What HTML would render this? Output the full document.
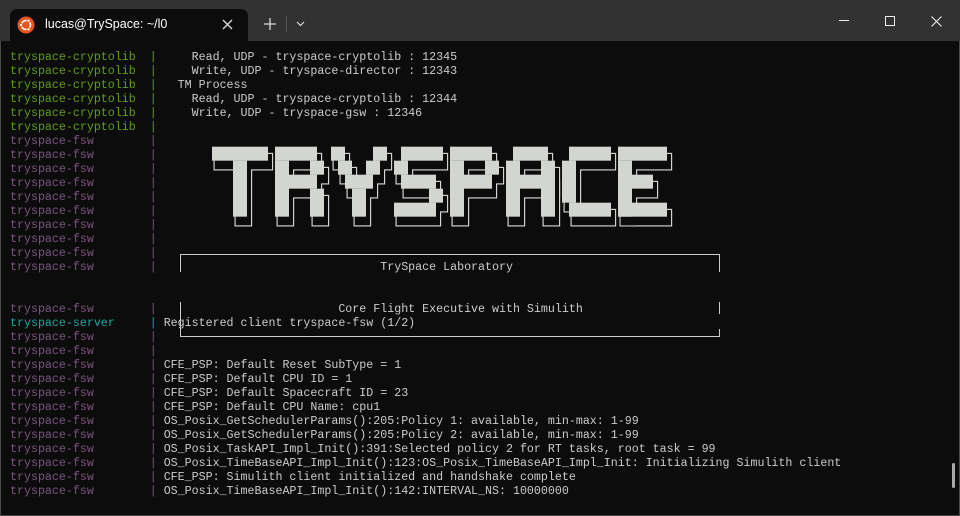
<!DOCTYPE html>
<html><head><meta charset="utf-8"><style>
*{margin:0;padding:0;box-sizing:border-box}
body{width:960px;height:516px;background:#0c0c0c;overflow:hidden;position:relative;font-family:"Liberation Mono",monospace;font-size:11.65px;color:#cccccc}
#tb{position:absolute;left:0;top:0;width:960px;height:41px;background:#323232}
#tab{position:absolute;left:10px;top:9px;width:238px;height:32px;background:#0c0c0c;border-radius:7px 7px 0 0}
.t{position:absolute;font-family:"Liberation Sans",sans-serif;color:#fff;font-size:12.5px}
#txt{position:absolute;left:0;top:2px;width:960px;height:500px}
.l{position:absolute;left:10px;white-space:pre;line-height:14px;height:14px}
.g{color:#5f9e1c}.p{color:#7c5480}.c{color:#1fa3a3}
.box{position:absolute;background:#cccccc}
#fr{position:absolute;left:0;top:41px;width:960px;height:475px;border:1px solid #4a4a4a;border-top:none}
</style></head><body>
<div id="tb">
<div id="tab"></div>
<svg style="position:absolute;left:17px;top:16px" width="18" height="18" viewBox="0 0 18 18"><circle cx="9" cy="9" r="8.5" fill="#e9541f"/><circle cx="9" cy="9" r="4.5" fill="none" stroke="#fff" stroke-width="1.6"/><circle cx="4" cy="9" r="1.6" fill="#fff" stroke="#e9541f" stroke-width="0.8"/><circle cx="11.5" cy="4.7" r="1.6" fill="#fff" stroke="#e9541f" stroke-width="0.8"/><circle cx="11.5" cy="13.3" r="1.6" fill="#fff" stroke="#e9541f" stroke-width="0.8"/></svg>
<div class="t" style="left:45px;top:17px">lucas@TrySpace: ~/l0</div>
<svg style="position:absolute;left:222px;top:19px" width="11" height="11"><path d="M1 1L10 10M10 1L1 10" stroke="#ddd" stroke-width="1.3"/></svg>
<svg style="position:absolute;left:264px;top:18px" width="12" height="12"><path d="M6 0V12M0 6H12" stroke="#ddd" stroke-width="1.3"/></svg>
<div style="position:absolute;left:286px;top:16px;width:1px;height:16px;background:#555"></div>
<svg style="position:absolute;left:296px;top:21px" width="9" height="6"><path d="M1 1L4.5 4.5L8 1" stroke="#ddd" stroke-width="1.2" fill="none"/></svg>
<div style="position:absolute;left:839px;top:20px;width:10px;height:1px;background:#eee"></div>
<div style="position:absolute;left:885px;top:16px;width:10px;height:10px;border:1px solid #eee"></div>
<svg style="position:absolute;left:931px;top:16px" width="11" height="11"><path d="M0.5 0.5L10.5 10.5M10.5 0.5L0.5 10.5" stroke="#eee" stroke-width="1.1"/></svg>
</div>
<div id="fr"></div>

<div id="txt">
<div class="l" style="top:49px"><span class="g">tryspace-cryptolib  |</span>     Read, UDP - tryspace-cryptolib : 12345</div>
<div class="l" style="top:63px"><span class="g">tryspace-cryptolib  |</span>     Write, UDP - tryspace-director : 12343</div>
<div class="l" style="top:77px"><span class="g">tryspace-cryptolib  |</span>   TM Process</div>
<div class="l" style="top:91px"><span class="g">tryspace-cryptolib  |</span>     Read, UDP - tryspace-cryptolib : 12344</div>
<div class="l" style="top:105px"><span class="g">tryspace-cryptolib  |</span>     Write, UDP - tryspace-gsw : 12346</div>
<div class="l" style="top:119px"><span class="g">tryspace-cryptolib  |</span></div>
<div class="l p" style="top:133px">tryspace-fsw        |</div>
<div class="l p" style="top:147px">tryspace-fsw        |</div>
<div class="l p" style="top:161px">tryspace-fsw        |</div>
<div class="l p" style="top:175px">tryspace-fsw        |</div>
<div class="l p" style="top:189px">tryspace-fsw        |</div>
<div class="l p" style="top:203px">tryspace-fsw        |</div>
<div class="l p" style="top:217px">tryspace-fsw        |</div>
<div class="l p" style="top:231px">tryspace-fsw        |</div>
<div class="l p" style="top:245px">tryspace-fsw        |</div>
<div class="l" style="top:259px"><span class="p">tryspace-fsw        |</span>                                TrySpace Laboratory</div>
<div class="l" style="top:301px"><span class="p">tryspace-fsw        |</span>                          Core Flight Executive with Simulith</div>
<div class="l" style="top:315px"><span class="c">tryspace-server     |</span> Registered client tryspace-fsw (1/2)</div>
<div class="l p" style="top:329px">tryspace-fsw        |</div>
<div class="l p" style="top:343px">tryspace-fsw        |</div>
<div class="l" style="top:357px"><span class="p">tryspace-fsw        |</span> CFE_PSP: Default Reset SubType = 1</div>
<div class="l" style="top:371px"><span class="p">tryspace-fsw        |</span> CFE_PSP: Default CPU ID = 1</div>
<div class="l" style="top:385px"><span class="p">tryspace-fsw        |</span> CFE_PSP: Default Spacecraft ID = 23</div>
<div class="l" style="top:399px"><span class="p">tryspace-fsw        |</span> CFE_PSP: Default CPU Name: cpu1</div>
<div class="l" style="top:413px"><span class="p">tryspace-fsw        |</span> OS_Posix_GetSchedulerParams():205:Policy 1: available, min-max: 1-99</div>
<div class="l" style="top:427px"><span class="p">tryspace-fsw        |</span> OS_Posix_GetSchedulerParams():205:Policy 2: available, min-max: 1-99</div>
<div class="l" style="top:441px"><span class="p">tryspace-fsw        |</span> OS_Posix_TaskAPI_Impl_Init():391:Selected policy 2 for RT tasks, root task = 99</div>
<div class="l" style="top:455px"><span class="p">tryspace-fsw        |</span> OS_Posix_TimeBaseAPI_Impl_Init():123:OS_Posix_TimeBaseAPI_Impl_Init: Initializing Simulith client</div>
<div class="l" style="top:469px"><span class="p">tryspace-fsw        |</span> CFE_PSP: Simulith client initialized and handshake complete</div>
<div class="l" style="top:483px"><span class="p">tryspace-fsw        |</span> OS_Posix_TimeBaseAPI_Impl_Init():142:INTERVAL_NS: 10000000</div>
</div>

<div class="box" style="left:180px;top:254px;width:540px;height:1px"></div>
<div class="box" style="left:180px;top:254px;width:1px;height:18px"></div>
<div class="box" style="left:719px;top:254px;width:1px;height:18px"></div>
<div class="box" style="left:180px;top:302px;width:1px;height:34px"></div>
<div class="box" style="left:719px;top:302px;width:1px;height:12px"></div>
<div class="box" style="left:719px;top:329px;width:1px;height:7px"></div>
<div class="box" style="left:180px;top:336px;width:540px;height:1px"></div>
<div style="position:absolute;left:952px;top:463px;width:3px;height:25px;background:#aaa;border-radius:2px"></div>

<svg style="position:absolute;left:200px;top:140px" width="480" height="100" viewBox="0 0 1440 300">
<defs><g id="L">
<rect x="36" y="20" width="168" height="42"/><rect x="99" y="62" width="42" height="168"/>
<rect x="225" y="20" width="126" height="42"/><rect x="225" y="62" width="42" height="168"/><rect x="330" y="62" width="42" height="42"/><rect x="225" y="104" width="126" height="42"/><rect x="330" y="146" width="42" height="84"/>
<rect x="393" y="20" width="42" height="42"/><rect x="519" y="20" width="42" height="42"/><rect x="414" y="62" width="42" height="42"/><rect x="498" y="62" width="42" height="42"/><rect x="435" y="104" width="84" height="42"/><rect x="456" y="146" width="42" height="84"/>
<rect x="603" y="20" width="126" height="42"/><rect x="582" y="62" width="42" height="42"/><rect x="603" y="104" width="105" height="42"/><rect x="687" y="146" width="42" height="42"/><rect x="582" y="188" width="126" height="42"/>
<rect x="750" y="20" width="126" height="42"/><rect x="750" y="62" width="42" height="168"/><rect x="855" y="62" width="42" height="42"/><rect x="750" y="104" width="126" height="42"/>
<rect x="939" y="20" width="105" height="42"/><rect x="918" y="62" width="42" height="168"/><rect x="1023" y="62" width="42" height="168"/><rect x="918" y="104" width="147" height="42"/>
<rect x="1107" y="20" width="126" height="42"/><rect x="1086" y="62" width="42" height="126"/><rect x="1107" y="188" width="126" height="42"/>
<rect x="1254" y="20" width="147" height="42"/><rect x="1254" y="62" width="42" height="168"/><rect x="1254" y="104" width="105" height="42"/><rect x="1254" y="188" width="147" height="42"/>
</g></defs>
<use href="#L" transform="translate(10,24)" fill="none" stroke="#d3d6d0" stroke-width="11"/>
<use href="#L" transform="translate(10,24)" fill="#0c0c0c" stroke="#0c0c0c" stroke-width="4"/>
<use href="#L" fill="#d3d6d0"/>
</svg>
</body></html>
